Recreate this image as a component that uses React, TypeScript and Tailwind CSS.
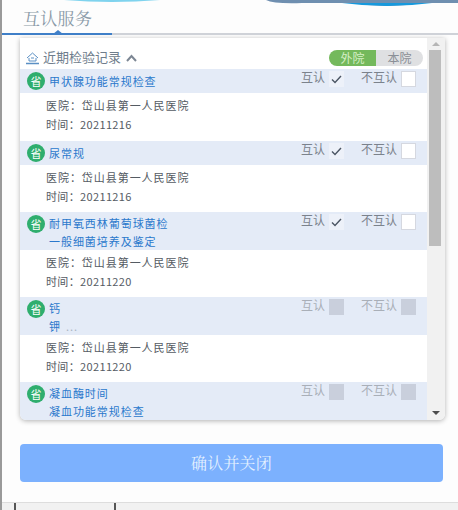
const font = { fontFamily: '"Noto Sans CJK SC", "Liberation Sans", sans-serif' };

type Rec = {
  names: string[];
  more?: boolean;
  hospital?: string;
  time?: string;
  disabled?: boolean;
};

const records: Rec[] = [
  { names: ["甲状腺功能常规检查"], hospital: "岱山县第一人民医院", time: "20211216" },
  { names: ["尿常规"], hospital: "岱山县第一人民医院", time: "20211216" },
  { names: ["耐甲氧西林葡萄球菌检", "一般细菌培养及鉴定"], hospital: "岱山县第一人民医院", time: "20211220" },
  { names: ["钙", "钾"], more: true, hospital: "岱山县第一人民医院", time: "20211220", disabled: true },
  { names: ["凝血酶时间", "凝血功能常规检查"], disabled: true },
];

const Row = ({ rec, first }: { rec: Rec; first: boolean }) => (
  <div>
    <div className={`flex bg-[#e4ebf7] pl-[7px] pr-[11px] pt-[3px] ${rec.names.length > 1 ? "h-[38px]" : "h-[24px]"}`}>
      <div className="w-[18px] h-[18px] rounded-full bg-[#2fae6e] text-white text-[11px] leading-[18px] text-center shrink-0">省</div>
      <div className={`ml-[4px] flex-1 text-[11px] leading-[18px] tracking-[0.95px] text-[#2a78cc] ${rec.names.length > 1 ? "-mt-[1px]" : ""}`}>
        {rec.names.map((n, i) => (
          <div key={n}>
            {n}
            {rec.more && i === rec.names.length - 1 && <span className="ml-[5px] text-[#aab4c2]">...</span>}
          </div>
        ))}
      </div>
      <div className={`flex items-start h-[18px] text-[12px] leading-[10px] ${rec.disabled ? "text-[#a9afb8]" : "text-[#7b828c]"}`}>
        <span>互认</span>
        <span className={`ml-[4px] -mt-[1px] w-[15px] h-[16px] flex items-center justify-center ${rec.disabled ? "bg-[#c9cfdc]" : "bg-[#edf1f9]"}`}>
          {!rec.disabled && (
            <svg width="11" height="9" viewBox="0 0 11 9" fill="none">
              <path d="M1 4.5 L4 7.5 L10 1" stroke="#4b5563" strokeWidth="1.4" />
            </svg>
          )}
        </span>
        <span className="ml-[17px]">不互认</span>
        <span className={`ml-[4px] -mt-[1px] w-[15px] h-[16px] border ${rec.disabled ? "bg-[#c9cfdc] border-[#c9cfdc]" : "bg-white border-[#d5d8e0]"}`} />
      </div>
    </div>
    {rec.hospital && (
      <div className={`${first ? "h-[48px]" : "h-[47px]"} pl-[26px] pt-[3px] text-[11px] leading-[19px] text-[#555b63]`}>
        <div className="tracking-[0.95px]">医院：{rec.hospital}</div>
        <div className="tracking-[0.35px]">时间：{rec.time}</div>
      </div>
    )}
  </div>
);

export default function App() {
  return (
    <div className="relative w-[458px] h-[510px] overflow-hidden bg-[#fdfdfd] border-l-2 border-[#9a9a9a]" style={font}>
      {/* top decoration */}
      <svg className="absolute left-0 top-0" width="456" height="8" viewBox="0 0 456 8">
        <path d="M62 0 Q110 4 158 0 Z" fill="#7fd3ee" />
        <path d="M264 0 Q272 4 300 3 L350 3 Q385 9 420 3 L456 3 L456 0 Z" fill="#6f8fb0" />
        <path d="M340 3 Q385 9 430 3 Z" fill="#1699dd" />
      </svg>

      <div className="h-[35px] border-b-2 border-[#cfd2d8] relative">
        <div className="absolute left-0 top-[4px] w-[110px] h-[31px] pl-[21px] border-b-2 border-[#3f7fc8] text-[17px] leading-[28px] tracking-[0.3px] text-[#8a9aa8]" style={{ fontFamily: '"Noto Serif CJK SC", "Noto Sans CJK SC", serif' }}>
          互认服务
        </div>
        <div className="absolute left-[51px] top-[30px] w-0 h-0 border-x-[5px] border-x-transparent border-b-[4px] border-b-[#3f7fc8]" />
      </div>

      <div className="ml-[18px] mt-[3px] w-[425px] h-[382px] rounded-b-[6px] shadow-[0_1px_5px_rgba(0,0,0,0.3)] flex overflow-hidden bg-white">
        <div className="w-[407px] overflow-hidden">
          <div className="h-[31px] flex items-end pb-[4px] pl-[5px] pr-[4px]">
            <svg width="15" height="14" viewBox="0 0 15 14" fill="none" stroke="#5a8fc4" strokeWidth="1">
              <path d="M2 7 L7.5 2 L13 7 M4 7 V10 H11 V7 M6 7 H9" />
              <path d="M1 12.5 H14" strokeWidth="1.5" />
            </svg>
            <span className="ml-[3px] text-[13px] leading-[16px] text-[#6f7d8c]">近期检验记录</span>
            <svg className="ml-[5px] mb-[3px]" width="11" height="8" viewBox="0 0 11 8" fill="none">
              <path d="M1 7 L5.5 2 L10 7" stroke="#7d8794" strokeWidth="2" />
            </svg>
            <div className="ml-auto mb-[-1px] flex w-[94px] h-[16px] rounded-full overflow-hidden text-[12px] leading-[16px] text-center">
              <span className="w-[47px] bg-[#74b95c] text-[#d5efc6]">外院</span>
              <span className="flex-1 bg-[#dfe0e2] text-[#8a8f96]">本院</span>
            </div>
          </div>
          {records.map((r, i) => (
            <Row key={r.names[0]} rec={r} first={i === 0} />
          ))}
        </div>
        <div className="w-[18px] bg-[#f1f1f1] flex flex-col items-start pl-[2px]">
          <div className="w-[13px] h-[12px] flex items-center justify-center">
            <div className="w-0 h-0 border-x-[4px] border-x-transparent border-b-[4px] border-b-[#b5b5b5]" />
          </div>
          <div className="w-[12px] h-[196px] bg-[#bdbdbd]" />
          <div className="mt-auto w-[13px] h-[14px] flex items-center justify-center">
            <div className="w-0 h-0 border-x-[4px] border-x-transparent border-t-[4px] border-t-[#4d4d4d]" />
          </div>
        </div>
      </div>

      <div className="ml-[18px] mt-[24px] w-[423px] h-[38px] rounded-[4px] bg-[#7cb1fe] text-[#e3f0ff] text-[16px] leading-[38px] tracking-[0.2px] text-center" style={{ fontFamily: '"Noto Serif CJK SC", "Noto Sans CJK SC", serif' }}>
        确认并关闭
      </div>

      <div className="mt-[20px] h-[20px] bg-[#f1f1f1] border-t border-[#dddddd] flex">
        <div className="ml-[12px] w-[102px] border-x-2 border-[#555555]" />
      </div>
    </div>
  );
}
